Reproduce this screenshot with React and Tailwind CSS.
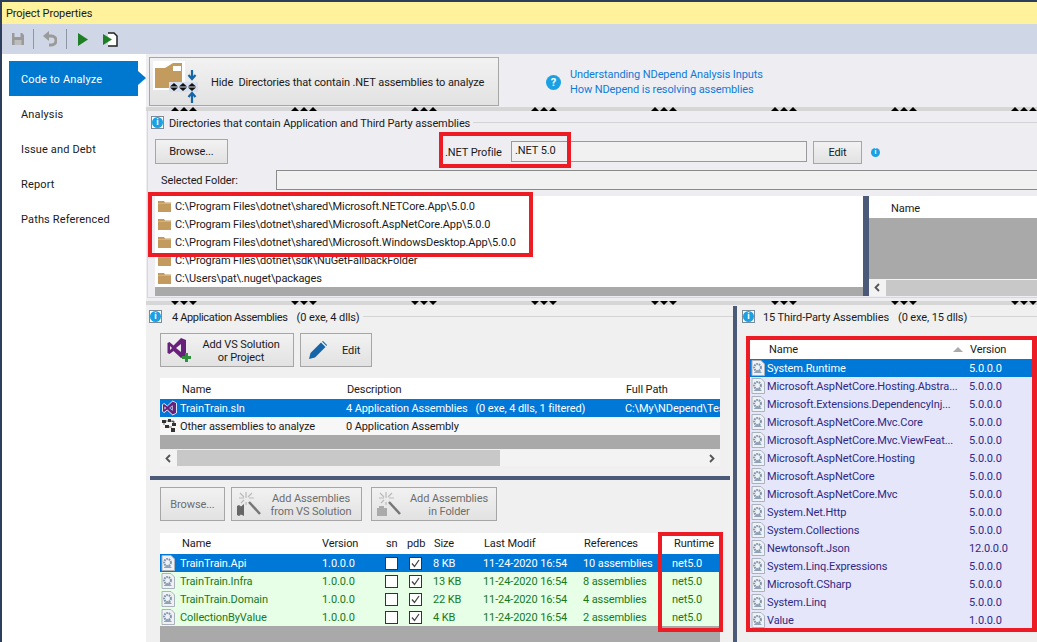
import React from "react";

const navItems = ["Analysis", "Issue and Debt", "Report", "Paths Referenced"];

const folders = [
    "C:\\Program Files\\dotnet\\shared\\Microsoft.NETCore.App\\5.0.0",
    "C:\\Program Files\\dotnet\\shared\\Microsoft.AspNetCore.App\\5.0.0",
    "C:\\Program Files\\dotnet\\shared\\Microsoft.WindowsDesktop.App\\5.0.0",
    "C:\\Program Files\\dotnet\\sdk\\NuGetFallbackFolder",
    "C:\\Users\\pat\\.nuget\\packages",
];

const appAssemblies = [
    {name: "TrainTrain.Api", size: "8 KB", refs: "10 assemblies", selected: true},
    {name: "TrainTrain.Infra", size: "13 KB", refs: "8 assemblies"},
    {name: "TrainTrain.Domain", size: "22 KB", refs: "4 assemblies"},
    {name: "CollectionByValue", size: "4 KB", refs: "2 assemblies"},
];

const thirdParty = [
    ["System.Runtime", "5.0.0.0"],
    ["Microsoft.AspNetCore.Hosting.Abstra...", "5.0.0.0"],
    ["Microsoft.Extensions.DependencyInj...", "5.0.0.0"],
    ["Microsoft.AspNetCore.Mvc.Core", "5.0.0.0"],
    ["Microsoft.AspNetCore.Mvc.ViewFeat...", "5.0.0.0"],
    ["Microsoft.AspNetCore.Hosting", "5.0.0.0"],
    ["Microsoft.AspNetCore", "5.0.0.0"],
    ["Microsoft.AspNetCore.Mvc", "5.0.0.0"],
    ["System.Net.Http", "5.0.0.0"],
    ["System.Collections", "5.0.0.0"],
    ["Newtonsoft.Json", "12.0.0.0"],
    ["System.Linq.Expressions", "5.0.0.0"],
    ["Microsoft.CSharp", "5.0.0.0"],
    ["System.Linq", "5.0.0.0"],
    ["Value", "1.0.0.0"],
];

function FolderIcon({className}) {
    return (
        <svg className={className} viewBox="0 0 13 12">
            <path d="M0 1h6l1 1.500h6V12H0z" fill="#c39b5e"/>
            <path d="M0 3.500h13" stroke="#d9bd8c" strokeWidth="0.7"/>
        </svg>
    );
}

function InfoBox() {
    return (
        <div className="w-[13px] h-[13px] border border-[#7a8a9a] bg-white flex items-center justify-center shrink-0">
            <div className="w-[11px] h-[11px] rounded-full bg-[#1ba1e2] text-white text-[9px] leading-[11px] text-center font-bold">i</div>
        </div>
    );
}

function AssemblyIcon() {
    return (
        <svg className="w-[14px] h-[16px] shrink-0" viewBox="0 0 14 16">
            <path d="M1 .5h9l3.500 3.500v11.500H1z" fill="#eef1f5" stroke="#aab2bc"/>
            <circle cx="6.500" cy="7.500" r="3.400" fill="none" stroke="#8094aa" strokeWidth="2" strokeDasharray="1.600 .8"/>
            <path d="M3 12.500l3-2.500 3 1 2 2H3z" fill="#8fa2b6"/>
        </svg>
    );
}

function VsLogo({className}) {
    return (
        <svg className={className} viewBox="0 0 24 24">
            <path
                fillRule="evenodd"
                d="M17 1 23 4v16l-6 3-8.500-8L3.500 19 1 17.500v-11L3.500 5l5 4zM17 7.500 11.500 12l5.500 4.500zM4 9.500v5l2.500-2.500z"
                fill="#fff"
                stroke="#fff"
                strokeWidth="1.500"
            />
            <path
                fillRule="evenodd"
                d="M17 1.500 22.500 4v16L17 22.500 8.500 14.500 3.500 18.500 1.500 17.500v-11l2-1 5 4zM17 7.500 11.500 12l5.500 4.500zM4 9.500v5l2.500-2.500z"
                fill="#68217a"
            />
        </svg>
    );
}

function Wand({children}) {
    return (
        <svg className="w-[26px] h-[26px] shrink-0" viewBox="0 0 26 26">
            <path d="M13 11l11 12" stroke="#777" strokeWidth="2.500"/>
            <path d="M10 1v6M10 11v3M3 7h5M13 7h5M4 2l4 4M16 2l-4 4M5 12l3-3" stroke="#bbb" strokeWidth="1.200"/>
            {children}
        </svg>
    );
}

// row of little black triangles on the splitter bars
function Grip({down}) {
    const cls = down
        ? "w-0 h-0 border-x-[4px] border-x-transparent border-t-[4px] border-t-black"
        : "w-0 h-0 border-x-[4px] border-x-transparent border-b-[4px] border-b-black";
    return (
        <div className="h-[4px] bg-[#d6d6d6] flex pl-[25px] gap-[94px] overflow-hidden shrink-0">
            {Array.from({length: 8}).map((_, i) => (
                <div key={i} className="flex gap-[1px] shrink-0">
                    <div className={cls}/>
                    <div className={cls}/>
                    <div className={cls}/>
                </div>
            ))}
        </div>
    );
}

function Button({className, children, disabled}) {
    return (
        <div className={`border border-[#a6a6a6] bg-gradient-to-b from-[#f2f2f2] to-[#e2e2e2] flex items-center justify-center shrink-0 ${disabled ? "text-[#6d6d6d]" : "text-[#1a1a1a]"} ${className}`}>
            {children}
        </div>
    );
}

function GroupTitle({first, second, gap}) {
    return (
        <div className="flex items-center h-[13px]">
            <InfoBox/>
            <span className={`${gap} pt-[2px] whitespace-nowrap`}>{first}</span>
            {second && <span className="ml-[9px] pt-[2px] whitespace-nowrap">{second}</span>}
            <div className="flex-1 h-px bg-[#d4d4d4] ml-[3px]"/>
        </div>
    );
}

function Chevron({right}) {
    return (
        <div className="w-[17px] flex justify-center shrink-0">
            <svg className="w-[7px] h-[9px]" viewBox="0 0 7 9">
                <path d={right ? "M2 1l3.500 3.500L2 8" : "M5 1L1.500 4.500 5 8"} fill="none" stroke="#555" strokeWidth="1.800"/>
            </svg>
        </div>
    );
}

function ScrollBar({thumb, right}) {
    return (
        <div className="h-[16px] bg-[#f3f3f3] flex items-center">
            <Chevron/>
            <div className={`h-full bg-[#c8c8c8] ${thumb}`}/>
            <div className="flex-1"/>
            {right && <Chevron right/>}
        </div>
    );
}

function Checkbox({checked}) {
    return (
        <div className="w-[13px] h-[13px] border border-[#333] bg-white flex items-center justify-center">
            {checked && (
                <svg className="w-[11px] h-[11px]" viewBox="0 0 11 11">
                    <path d="M2 5.500 4.500 8.500 9 2" fill="none" stroke="#444" strokeWidth="1.300"/>
                </svg>
            )}
        </div>
    );
}

function AssemblyRow({row}) {
    const color = row.selected ? "bg-[#0078d7] text-white" : "bg-[#e6ffe6] text-[#17791c]";
    return (
        <div className={`h-[18px] flex items-center whitespace-nowrap ${color}`}>
            <div className="w-[20px] pl-[1px]"><AssemblyIcon/></div>
            <div className="w-[142px] pt-[2px]">{row.name}</div>
            <div className="w-[63px] pt-[2px]">1.0.0.0</div>
            <div className="w-[24px]"><Checkbox/></div>
            <div className="w-[24px]"><Checkbox checked/></div>
            <div className="w-[50px] pt-[2px]">{row.size}</div>
            <div className="w-[100px] pt-[2px]">11-24-2020 16:54</div>
            <div className="w-[89px] pt-[2px]">{row.refs}</div>
            <div className="pt-[2px]">net5.0</div>
        </div>
    );
}

export default function App() {
    return (
        <div className="relative w-[1037px] h-[642px] overflow-hidden flex flex-col border-t-2 border-l-2 border-[#2d3e5c] bg-[#eeeef2] text-[11px] tracking-[-0.1px] leading-[16px] text-[#1a1a1a] font-['Roboto',sans-serif]">
            <div className="h-[22px] bg-[#fff29d] flex items-center pl-[4px] pt-[2px] shrink-0">Project Properties</div>

            <div className="h-[30px] bg-[#cfd6e5] flex items-center pl-[9px] shrink-0">
                <svg className="w-[14px] h-[14px]" viewBox="0 0 14 14">
                    <path d="M1 1h10l2 2v10H1z" fill="#9a9a9a"/>
                    <path d="M3.500 1h6v4h-6z" fill="#cfd6e5"/>
                    <path d="M3.500 8h7v5h-7z" fill="#bdbdbd"/>
                </svg>
                <div className="w-px h-[20px] bg-[#8f96a6] ml-[8px]"/>
                <svg className="w-[14px] h-[16px] ml-[9px]" viewBox="0 0 14 16">
                    <path d="M3 5h5.500a4 4 0 0 1 0 9H6" fill="none" stroke="#9a9a9a" strokeWidth="3"/>
                    <path d="M0 5 6 0v10z" fill="#9a9a9a"/>
                </svg>
                <div className="w-px h-[20px] bg-[#8f96a6] ml-[9px]"/>
                <svg className="w-[10px] h-[13px] ml-[11px]" viewBox="0 0 10 13">
                    <path d="M0 0l10 6.500L0 13z" fill="#1f7f26"/>
                </svg>
                <svg className="w-[15px] h-[15px] ml-[15px]" viewBox="0 0 15 15">
                    <path d="M5 1h6l3 3v10H5" fill="#fff" stroke="#222" strokeWidth="1.500"/>
                    <path d="M0 2l9 5.500L0 13z" fill="#1f7f26"/>
                </svg>
            </div>

            <div className="flex-1 flex min-h-0">
                <div className="w-[144px] bg-white shrink-0 pt-[7px] pl-[7px] tracking-[0.15px]">
                    <div className="relative w-[129px] h-[35px] bg-[#0078cf] text-white flex items-center pl-[12px] pt-[2px]">
                        Code to Analyze
                        <div className="absolute left-full top-[10px] w-0 h-0 border-y-[7px] border-y-transparent border-l-[8px] border-l-[#0078cf]"/>
                    </div>
                    {navItems.map((item) => (
                        <div key={item} className="h-[35px] flex items-center pl-[12px] pt-[2px]">{item}</div>
                    ))}
                </div>

                <div className="flex-1 flex flex-col min-w-0">
                    <div className="h-[53px] flex items-start shrink-0">
                        <Button className="ml-[3px] mt-[3px] w-[350px] h-[49px] !justify-start">
                            <svg className="w-[46px] h-[45px] ml-[3px] shrink-0" viewBox="0 0 46 45">
                                <path d="M0 2h32v29H0z" fill="#fff"/>
                                <path d="M2 9h10l8-5h9v25H2z" fill="#c39b5e"/>
                                <path d="M20 7h8v5h-8z" fill="#fff"/>
                                <path d="M16 23h29v10H16z" fill="#d6e0ee"/>
                                <path d="M17 27.500l4-3.500 4 3.500zM17 28.500l4 3.500 4-3.500zM26 27.500l4-3.500 4 3.500zM26 28.500l4 3.500 4-3.500zM35 27.500l4-3.500 4 3.500zM35 28.500l4 3.500 4-3.500z" fill="#111"/>
                                <path d="M39 11v9M35.500 16l3.500 4 3.500-4M39 44v-9M35.500 38l3.500-4 3.500 4" fill="none" stroke="#1565a8" strokeWidth="2.200"/>
                            </svg>
                            <span className="ml-[12px] pt-[2px] whitespace-nowrap">Hide&nbsp; Directories that contain .NET assemblies to analyze</span>
                        </Button>
                        <div className="ml-[47px] mt-[13px] flex items-center">
                            <div className="w-[15px] h-[15px] rounded-full bg-[#1ba1e2] text-white text-[11px] leading-[15px] text-center font-bold">?</div>
                            <div className="ml-[9px] text-[#0f7ad8] leading-[15px]">
                                <div>Understanding NDepend Analysis Inputs</div>
                                <div>How NDepend is resolving assemblies</div>
                            </div>
                        </div>
                    </div>

                    <Grip/>

                    <div className="h-[190px] shrink-0">
                        <div className="h-[187px] ml-px border-l border-b border-[#d8d8d8] flex flex-col">
                            <div className="mt-[5px] ml-[3px]">
                                <GroupTitle first="Directories that contain Application and Third Party assemblies" gap="ml-[5px]"/>
                            </div>
                            <div className="mt-[10px] flex items-start h-[25px] shrink-0">
                                <Button className="ml-[7px] w-[73px] h-[25px]">Browse...</Button>
                                <span className="ml-[217px] mt-[6px] w-[66px] whitespace-nowrap">.NET Profile</span>
                                <div className="mt-[2px] w-[296px] h-[21px] border border-[#999] bg-[#f1f1f1] pl-[3px] leading-[18px]">.NET 5.0</div>
                                <Button className="ml-[6px] mt-[2px] w-[49px] h-[23px]">Edit</Button>
                                <div className="ml-[9px] mt-[9px] w-[9px] h-[9px] rounded-full bg-[#1ba1e2] text-white text-[7px] leading-[9px] text-center font-bold">i</div>
                            </div>
                            <div className="mt-[6px] h-[20px] flex items-center shrink-0">
                                <span className="ml-[13px] w-[115px] pt-[2px]">Selected Folder:</span>
                                <div className="flex-1 h-full border-y border-[#8a8a8a] border-l bg-[#f1f1f1]"/>
                            </div>
                            <div className="mt-[6px] h-[100px] flex shrink-0">
                                <div className="ml-[7px] w-[708px] flex flex-col">
                                    <div className="flex-1 bg-white pt-px">
                                        {folders.map((f) => (
                                            <div key={f} className="h-[18px] flex items-center pl-[3px] whitespace-nowrap">
                                                <FolderIcon className="w-[13px] h-[12px] shrink-0"/>
                                                <span className="ml-[4px] pt-[2px]">{f}</span>
                                            </div>
                                        ))}
                                    </div>
                                    <div className="h-[10px] bg-[#a9a9a9]"/>
                                </div>
                                <div className="w-[6px] bg-[#4a5a78]"/>
                                <div className="flex-1 flex flex-col">
                                    <div className="h-[22px] bg-white pl-[22px] pt-[4px] flex items-center">Name</div>
                                    <div className="flex-1 bg-[#a9a9a9]"/>
                                    <div className="h-[17px] bg-[#f3f3f3] flex items-center">
                                        <Chevron/>
                                        <div className="h-[16px] flex-1 bg-[#c8c8c8]"/>
                                    </div>
                                </div>
                            </div>
                        </div>
                    </div>

                    <Grip down/>

                    <div className="flex-1 flex min-h-0 bg-[#f0f0f0]">
                        <div className="w-[587px] shrink-0 flex flex-col">
                            <div className="mt-[5px] ml-[3px]">
                                <GroupTitle first="4 Application Assemblies" second="(0 exe, 4 dlls)" gap="ml-[10px] tracking-[-0.35px]"/>
                            </div>
                            <div className="mt-[10px] ml-[14px] flex gap-[6px]">
                                <Button className="w-[134px] h-[34px] !justify-start pl-[6px]">
                                    <svg className="w-[24px] h-[28px] shrink-0" viewBox="0 0 24 28">
                                        <path fillRule="evenodd" d="M14 2 19 4v16l-5 2-7.500-7L2.500 18 .5 17V7l2-1 4 3.500zM14 8 9 12l5 4zM3 10v4l2-2z" fill="#68217a"/>
                                        <path d="M15 20h3v-3h3v3h3v3h-3v3h-3v-3h-3z" fill="#2f8f3a"/>
                                    </svg>
                                    <span className="ml-[8px] w-[84px] pt-[2px] text-center leading-[13px] whitespace-nowrap">Add VS Solution<br/>or Project</span>
                                </Button>
                                <Button className="w-[72px] h-[34px] !justify-start pl-[8px]">
                                    <svg className="w-[18px] h-[18px] shrink-0" viewBox="0 0 18 18">
                                        <path d="M0 18l1.500-6L12 1.500l4.500 4.500L6 16.500z" fill="#1565a8"/>
                                        <path d="M13 .5l1-.5 4 4-.5 1z" fill="#1565a8"/>
                                    </svg>
                                    <span className="ml-[15px] pt-[2px]">Edit</span>
                                </Button>
                            </div>
                            <div className="mt-[11px] ml-[14px] w-[560px] flex flex-col">
                                <div className="h-[21px] bg-white flex items-center pl-[22px] pt-[2px]">
                                    <span className="w-[165px]">Name</span>
                                    <span className="w-[279px]">Description</span>
                                    <span>Full Path</span>
                                </div>
                                <div className="h-[18px] bg-[#0078d7] text-white flex items-center whitespace-nowrap overflow-hidden">
                                    <VsLogo className="w-[15px] h-[16px] ml-[2px] shrink-0"/>
                                    <span className="ml-[3px] w-[166px] pt-[2px] shrink-0">TrainTrain.sln</span>
                                    <span className="w-[279px] pt-[2px] shrink-0">4 Application Assemblies&nbsp;&nbsp;&nbsp;(0 exe, 4 dlls, 1 filtered)</span>
                                    <span className="min-w-0 pt-[2px] overflow-hidden">C:\My\NDepend\Tes</span>
                                </div>
                                <div className="h-[18px] bg-[#f7f7f7] flex items-center whitespace-nowrap">
                                    <svg className="w-[15px] h-[14px] ml-[2px] shrink-0" viewBox="0 0 15 14">
                                        <path d="M0 1h4v3H0zM6 0h3v3H6zM10 4h4v3h-4zM3 6h4v3H3zM9 9h4v4H9z" fill="#333"/>
                                        <path d="M4 2h2M2 4v2M9 2h3v2M7 8h3" stroke="#777"/>
                                    </svg>
                                    <span className="ml-[3px] w-[166px] pt-[2px] shrink-0">Other assemblies to analyze</span>
                                    <span className="pt-[2px]">0 Application Assembly</span>
                                </div>
                                <div className="h-[14px] bg-[#a9a9a9]"/>
                                <div className="mt-px">
                                    <ScrollBar thumb="w-[323px]" right/>
                                </div>
                            </div>
                            <div className="mt-[10px] ml-[4px] w-[580px] h-[4px] bg-[#4a5a78] shrink-0"/>
                            <div className="mt-[7px] ml-[14px] flex">
                                <Button disabled className="w-[65px] h-[34px] pt-[2px]">Browse...</Button>
                                <Button disabled className="ml-[6px] w-[131px] h-[34px] !justify-start pl-[4px]">
                                    <Wand>
                                        <path d="M8 13v12l-3-1.500-2 1.500-2-1v-9l2-1 2 1.500z" fill="#666"/>
                                    </Wand>
                                    <span className="ml-[7px] w-[84px] pt-[2px] text-center leading-[13px] whitespace-nowrap">Add Assemblies<br/>from VS Solution</span>
                                </Button>
                                <Button disabled className="ml-[9px] w-[126px] h-[34px] !justify-start pl-[4px]">
                                    <Wand>
                                        <path d="M1 17h10v8H1zM3 15h5v2H3z" fill="#aaa"/>
                                    </Wand>
                                    <span className="ml-[8px] w-[78px] pt-[2px] text-center leading-[13px] whitespace-nowrap">Add Assemblies<br/>in Folder</span>
                                </Button>
                            </div>
                            <div className="mt-[12px] ml-[14px] w-[560px] flex-1 flex flex-col">
                                <div className="h-[21px] bg-white flex items-center whitespace-nowrap">
                                    <div className="w-[22px]"/>
                                    <div className="w-[140px]">Name</div>
                                    <div className="w-[64px]">Version</div>
                                    <div className="w-[21px]">sn</div>
                                    <div className="w-[27px]">pdb</div>
                                    <div className="w-[50px]">Size</div>
                                    <div className="w-[100px]">Last Modif</div>
                                    <div className="w-[90px]">References</div>
                                    <div>Runtime</div>
                                </div>
                                {appAssemblies.map((row) => <AssemblyRow key={row.name} row={row}/>)}
                                <div className="flex-1 bg-[#a9a9a9]"/>
                            </div>
                        </div>

                        <div className="w-[4px] bg-[#4a5a78] shrink-0 mt-[1px]"/>

                        <div className="flex-1 flex flex-col min-w-0">
                            <div className="mt-[5px] ml-[5px]">
                                <GroupTitle first="15 Third-Party Assemblies" second="(0 exe, 15 dlls)" gap="ml-[8px]"/>
                            </div>
                            <div className="mt-[17px] ml-[13px] w-[282px]">
                                <div className="h-[19px] bg-white flex items-center pl-[19px]">
                                    <span className="w-[184px]">Name</span>
                                    <div className="w-0 h-0 border-x-[5px] border-x-transparent border-b-[5px] border-b-[#aaa]"/>
                                    <span className="ml-[7px]">Version</span>
                                </div>
                                {thirdParty.map(([name, version], i) => (
                                    <div
                                        key={name}
                                        className={`h-[18px] flex items-center whitespace-nowrap ${i === 0 ? "bg-[#0078d7] text-white" : "bg-[#e6e6fa] text-[#2e2a86]"}`}
                                    >
                                        <div className="w-[17px] pl-px"><AssemblyIcon/></div>
                                        <div className="w-[202px] pt-[2px]">{name}</div>
                                        <div className="pt-[2px]">{version}</div>
                                    </div>
                                ))}
                            </div>
                        </div>
                    </div>
                </div>
            </div>

            {/* red annotation frames drawn over the screenshot */}
            <div className="absolute left-[437px] top-[130px] w-[132px] h-[36px] border-[4px] border-[#ed1c24]"/>
            <div className="absolute left-[146px] top-[190px] w-[385px] h-[65px] border-[4px] border-[#ed1c24]"/>
            <div className="absolute left-[656px] top-[530px] w-[65px] h-[100px] border-[4px] border-[#ed1c24]"/>
            <div className="absolute left-[744px] top-[334px] w-[291px] h-[296px] border-[4px] border-[#ed1c24] border-r-[5px]"/>
        </div>
    );
}
